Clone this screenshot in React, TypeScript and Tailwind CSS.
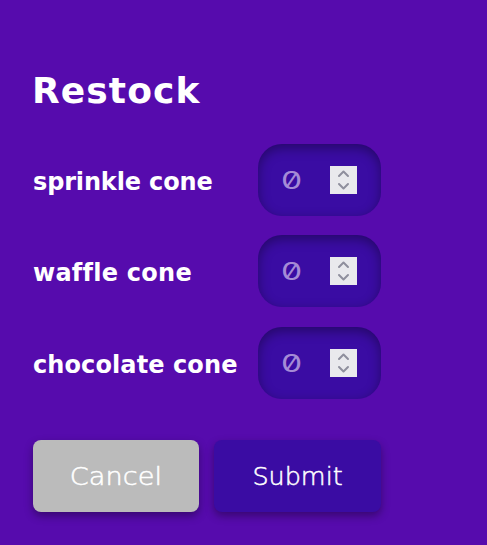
import React from "react";

type Item = { name: string; tracking: string; gap: string };

const items: Item[] = [
  { name: "sprinkle cone", tracking: "tracking-[-0.15px]", gap: "mb-[19px]" },
  { name: "waffle cone", tracking: "tracking-[0.25px]", gap: "mb-5" },
  { name: "chocolate cone", tracking: "tracking-[0.1px]", gap: "" },
];

function Spinner() {
  return (
    <div className="h-7 w-[27px] bg-[#e9e9ed]">
      <svg
        viewBox="0 0 27 28"
        className="h-7 w-[27px]"
        fill="none"
        stroke="#8f8f9d"
        strokeWidth="2"
        strokeLinecap="round"
        strokeLinejoin="round"
      >
        <path d="M9 10 L13.5 5.5 L18 10" />
        <path d="M9 18 L13.5 22.5 L18 18" />
      </svg>
    </div>
  );
}

function QuantityField() {
  return (
    <div className="flex h-[72px] w-[123px] items-center justify-between rounded-[24px] bg-[#3a0ca3] px-6 shadow-[inset_0_4px_12px_rgba(0,0,0,0.36)]">
      <span className="w-[19px] scale-x-[1.4] pt-px text-center font-['Inter',sans-serif] text-2xl leading-none text-[#a58bd6] [font-feature-settings:'zero']">
        0
      </span>
      <Spinner />
    </div>
  );
}

export default function App() {
  return (
    <main className="h-[545px] w-full overflow-hidden bg-[#560bad] pt-[67px] pl-[33px] font-['DejaVu_Sans',sans-serif] text-white">
      <h1 className="ml-[-1px] h-[77px] text-[36px] leading-[48px] font-bold tracking-[1.1px]">
        Restock
      </h1>
      {items.map((item) => (
        <div key={item.name} className={`flex h-[72px] w-[348px] items-center justify-between ${item.gap}`}>
          <span className={`pt-1 text-2xl leading-8 font-bold whitespace-nowrap ${item.tracking}`}>
            {item.name}
          </span>
          <QuantityField />
        </div>
      ))}
      <div className="mt-[41px] flex gap-[15px]">
        <button className="h-[72px] w-[166px] rounded-lg bg-[#bbb] pt-0.5 text-2xl font-extralight shadow-[0_4px_8px_rgba(0,0,0,0.35)] [-webkit-text-stroke:0.5px_white]">
          <span className="inline-block scale-x-[1.13] tracking-[0.1px]">Cancel</span>
        </button>
        <button className="h-[72px] w-[167px] rounded-lg bg-[#3a0ca3] pt-0.5 text-2xl font-extralight shadow-[0_4px_8px_rgba(0,0,0,0.35)] [-webkit-text-stroke:0.5px_white]">
          <span className="inline-block scale-x-[1.06]">Submit</span>
        </button>
      </div>
    </main>
  );
}
